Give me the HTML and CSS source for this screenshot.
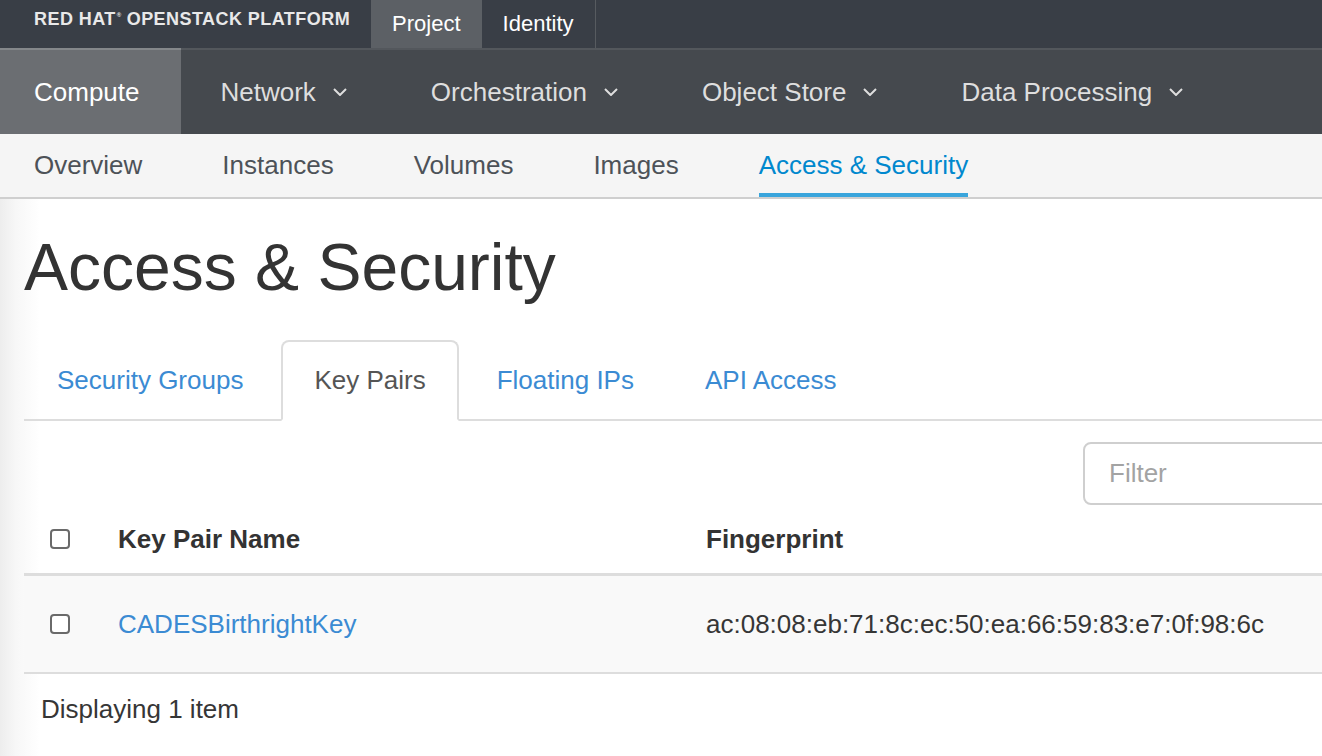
FILE: index.html
```html
<!DOCTYPE html>
<html lang="en">
<head>
<meta charset="utf-8">
<title>Access &amp; Security</title>
<link rel="stylesheet" href="styles.css">
</head>
<body>
<header class="topbar">
  <div class="brand">RED HAT<sup class="reg">®</sup> OPENSTACK PLATFORM</div>
  <nav class="dash-tabs">
    <a class="dash-tab active">Project</a>
    <a class="dash-tab">Identity</a>
  </nav>
</header>

<nav class="mainnav">
  <a class="mainnav-item active">Compute</a>
  <a class="mainnav-item">Network<svg class="chev" viewBox="0 0 14 8" width="14" height="8"><polyline points="1,1 7,7 13,1"/></svg></a>
  <a class="mainnav-item">Orchestration<svg class="chev" viewBox="0 0 14 8" width="14" height="8"><polyline points="1,1 7,7 13,1"/></svg></a>
  <a class="mainnav-item">Object Store<svg class="chev" viewBox="0 0 14 8" width="14" height="8"><polyline points="1,1 7,7 13,1"/></svg></a>
  <a class="mainnav-item">Data Processing<svg class="chev" viewBox="0 0 14 8" width="14" height="8"><polyline points="1,1 7,7 13,1"/></svg></a>
</nav>

<nav class="subnav">
  <a class="subnav-item">Overview</a>
  <a class="subnav-item">Instances</a>
  <a class="subnav-item">Volumes</a>
  <a class="subnav-item">Images</a>
  <a class="subnav-item active">Access &amp; Security</a>
</nav>

<main class="content">
  <div class="inner">
    <h1 class="page-title">Access &amp; Security</h1>

    <ul class="tabs">
      <li class="tab"><a>Security Groups</a></li>
      <li class="tab active"><a>Key Pairs</a></li>
      <li class="tab"><a>Floating IPs</a></li>
      <li class="tab"><a>API Access</a></li>
    </ul>

    <div class="toolbar">
      <input class="filter" type="text" placeholder="Filter">
    </div>

    <table class="datatable">
      <colgroup>
        <col class="col-check">
        <col class="col-name">
        <col>
      </colgroup>
      <thead>
        <tr>
          <th class="check-cell"><span class="checkbox"></span></th>
          <th>Key Pair Name</th>
          <th>Fingerprint</th>
        </tr>
      </thead>
      <tbody>
        <tr>
          <td class="check-cell"><span class="checkbox"></span></td>
          <td><a class="link">CADESBirthrightKey</a></td>
          <td>ac:08:08:eb:71:8c:ec:50:ea:66:59:83:e7:0f:98:6c</td>
        </tr>
      </tbody>
      <tfoot>
        <tr>
          <td colspan="3" class="footer-cell">Displaying 1 item</td>
        </tr>
      </tfoot>
    </table>
  </div>
</main>
</body>
</html>
```

FILE: styles.css
```css
html, body {
  margin: 0;
  padding: 0;
  overflow: hidden;
  height: 100%;
}

body {
  font-family: "Liberation Sans", Arial, sans-serif;
  color: #363636;
  background: #fff;
}

a { cursor: pointer; }

/* ---------- top bar ---------- */
.topbar {
  display: flex;
  height: 48px;
  background: #393e46;
}

.brand {
  align-self: flex-start;
  margin: 10px 0 0 34px;
  font-size: 18px;
  line-height: 18px;
  font-weight: bold;
  letter-spacing: 0.45px;
  color: #e9e9e9;
  white-space: nowrap;
}

.reg {
  font-size: 6px;
  line-height: 0;
  vertical-align: 8px;
  letter-spacing: 0;
  margin-left: 1px;
}

.dash-tabs {
  display: flex;
  margin-left: 21px;
  border-right: 1px solid #575b60;
}

.dash-tab {
  display: flex;
  align-items: center;
  padding: 0 21px;
  font-size: 22px;
  color: #fff;
}

.dash-tab.active {
  background: #5c6065;
}

/* ---------- main nav ---------- */
.mainnav {
  display: flex;
  height: 84px;
  background: #45494e;
  border-top: 2px solid #53575c;
}

.mainnav-item {
  display: flex;
  align-items: center;
  padding: 0 44px 0 40px;
  font-size: 26px;
  color: #dedede;
}

.mainnav-item.active {
  padding: 0 41px 0 34px;
  background: #6b6e72;
  color: #fff;
  margin-top: -2px;
  border-top: 2px solid #84878a;
}

.chev {
  margin-left: 17px;
  fill: none;
  stroke: #dedede;
  stroke-width: 2;
}

/* ---------- sub nav ---------- */
.subnav {
  display: flex;
  gap: 80px;
  height: 63px;
  padding-left: 34px;
  background: #f5f5f5;
  border-bottom: 2px solid #cfcfcf;
}

.subnav-item {
  display: flex;
  align-items: center;
  padding-top: 4px;
  border-bottom: 4px solid transparent;
  font-size: 26px;
  color: #4d5258;
}

.subnav-item.active {
  color: #0088ce;
  border-bottom-color: #39a5dc;
}

/* ---------- content ---------- */
.content {
  height: calc(100% - 199px);
  padding-left: 24px;
  background: linear-gradient(90deg, #ededed 0, #f7f7f7 16px, #fff 40px);
}

.inner {
  width: 1360px;
}

.page-title {
  margin: 0;
  padding-top: 31px;
  font-size: 66px;
  line-height: 74px;
  font-weight: normal;
  color: #333;
}

/* tabs */
.tabs {
  display: flex;
  margin: 36px 0 0;
  padding: 0;
  list-style: none;
  border-bottom: 2px solid #ddd;
}

.tab {
  margin: 0 5px -2px 0;
}

.tab a {
  display: block;
  padding: 20px 31px;
  font-size: 26px;
  line-height: 37px;
  color: #3b8bd3;
  border: 2px solid transparent;
  border-radius: 8px 8px 0 0;
}

.tab.active a {
  color: #555;
  background: #fff;
  border-color: #ddd;
  border-bottom-color: #fff;
}

/* toolbar */
.toolbar {
  display: flex;
  justify-content: flex-end;
  padding-top: 21px;
}

.filter {
  box-sizing: border-box;
  width: 301px;
  height: 63px;
  padding: 0 24px;
  font-family: "Liberation Sans", Arial, sans-serif;
  font-size: 26px;
  color: #555;
  border: 2px solid #cfcfcf;
  border-radius: 8px;
  background: #fff;
  outline: none;
}

.filter::placeholder {
  color: #a3a3a3;
}

/* table */
.datatable {
  width: 100%;
  table-layout: fixed;
  border-collapse: collapse;
  font-size: 26px;
  line-height: 37px;
}

.col-check { width: 78px; }
.col-name { width: 588px; }

.datatable th {
  height: 68px;
  padding: 0 16px;
  text-align: left;
  vertical-align: middle;
  font-weight: bold;
  color: #333;
  border-bottom: 3px solid #ddd;
}

.datatable tbody td {
  height: 96px;
  padding: 0 16px;
  vertical-align: middle;
  background: #f9f9f9;
  border-bottom: 2px solid #ddd;
  color: #363636;
  white-space: nowrap;
}

.datatable .check-cell {
  padding: 0 0 0 26px;
}

.checkbox {
  display: block;
  box-sizing: border-box;
  width: 20px;
  height: 20px;
  border: 2px solid #6a6a6a;
  border-radius: 4px;
  background: #fff;
}

.link {
  color: #3b8bd3;
}

.datatable tfoot .footer-cell {
  padding: 17px 17px 15px;
  color: #363636;
}
```
